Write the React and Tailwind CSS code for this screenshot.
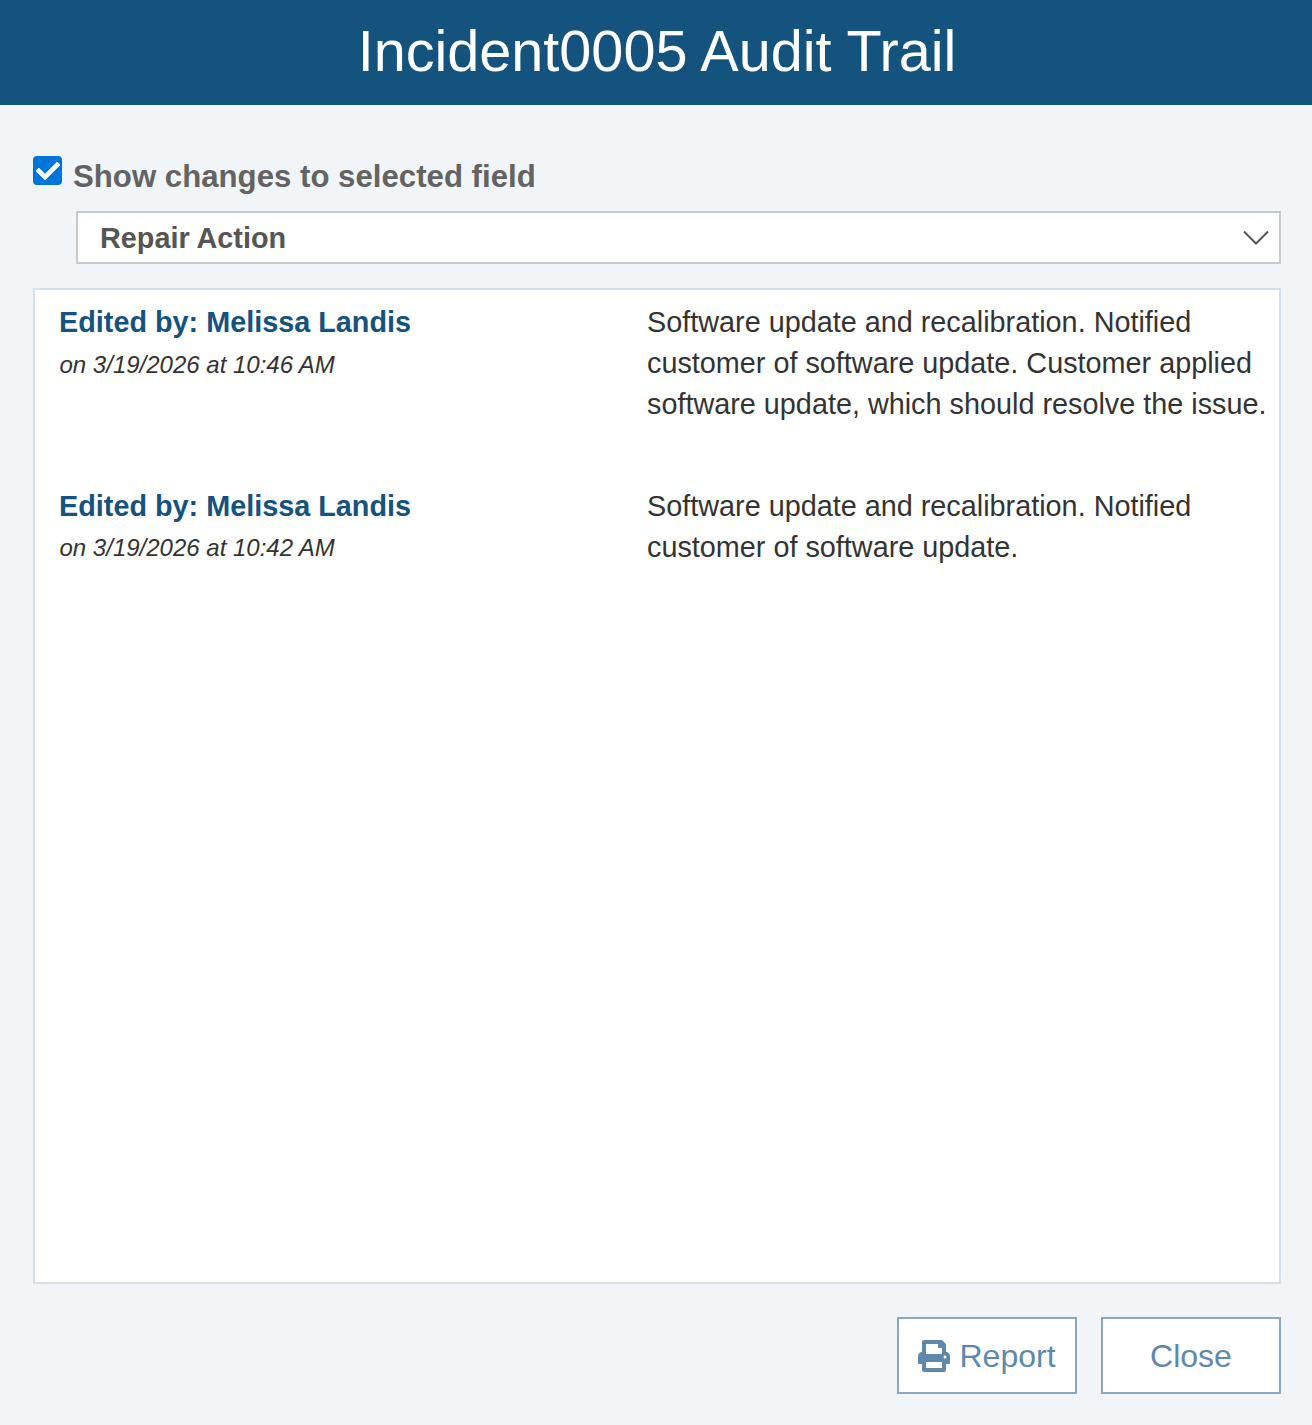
import React from 'react';
import { FaPrint, FaCheck } from 'react-icons/fa';

const entries = [
  {
    author: 'Melissa Landis',
    date: 'on 3/19/2026 at 10:46 AM',
    text: 'Software update and recalibration. Notified customer of software update. Customer applied software update, which should resolve the issue.',
  },
  {
    author: 'Melissa Landis',
    date: 'on 3/19/2026 at 10:42 AM',
    text: 'Software update and recalibration. Notified customer of software update.',
  },
];

function Entry({ author, date, text }) {
  return (
    <div className="flex h-[183.5px]">
      <div className="w-[612px] shrink-0 pl-[24px]">
        <div className="text-[28.8px] leading-[41.14px] font-bold text-[#15537f]">
          Edited by: {author}
        </div>
        <div className="text-[24px] leading-[42.6px] pl-[0.5px] italic text-[#333333]">{date}</div>
      </div>
      <div className="flex-1 text-[28.8px] leading-[41px] text-[#333333]">{text}</div>
    </div>
  );
}

export default function App() {
  return (
    <div className="w-[1312px] h-[1425px] flex flex-col bg-[#f2f5f8] font-['Liberation_Sans',Arial,sans-serif]">
      <div className="h-[105px] bg-[#15537f] flex items-center justify-center text-white text-[57.6px] pb-[3px] pl-[2px]">
        Incident0005 Audit Trail
      </div>

      <div className="flex-1 flex flex-col pl-[33px] pr-[31px]">
        <div className="flex items-start mt-[51px] h-[55px]">
          <div className="w-[29px] h-[29px] rounded-[4px] bg-[#0075d9] flex items-center justify-center text-white text-[24px]">
            <FaCheck />
          </div>
          <span className="ml-[11px] mt-[1px] text-[31.2px] leading-[40px] font-bold text-[#636363]">
            Show changes to selected field
          </span>
        </div>

        <div className="ml-[43px] h-[53px] border-2 border-[#c9c9c9] bg-white flex items-center justify-between pl-[22px] pr-[10px]">
          <span className="text-[28.8px] font-bold text-[#555555] mt-[2px]">Repair Action</span>
          <svg width="26" height="16" viewBox="0 0 26 16" fill="none" stroke="#555555" strokeWidth="2">
            <path d="M1 1.5 L13 13.5 L25 1.5" />
          </svg>
        </div>

        <div className="mt-[24px] h-[996px] border-2 border-[#d3dfe9] bg-white pt-[12.4px]">
          {entries.map((entry, i) => (
            <Entry key={i} {...entry} />
          ))}
        </div>

        <div className="mt-[33px] flex justify-end gap-[24px]">
          <button className="w-[180px] h-[77px] border-2 border-[#8aa8c2] bg-white flex items-center justify-center gap-[9px] text-[32px] text-[#5e89ad]">
            <FaPrint className="text-[32px]" />
            Report
          </button>
          <button className="w-[180px] h-[77px] border-2 border-[#8aa8c2] bg-white flex items-center justify-center text-[32px] text-[#5e89ad]">
            Close
          </button>
        </div>
      </div>
    </div>
  );
}
